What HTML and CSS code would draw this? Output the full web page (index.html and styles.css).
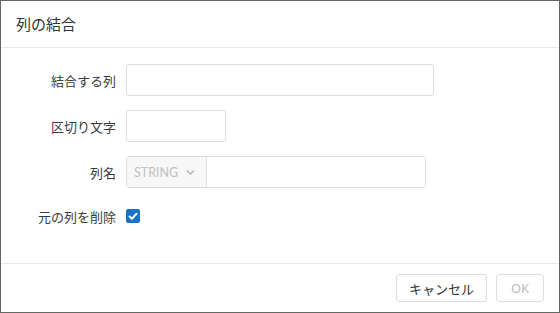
FILE: index.html
```html
<!DOCTYPE html>
<html lang="ja">
<head>
    <meta charset="UTF-8">
    <title>列の結合</title>
    <link rel="stylesheet" href="styles.css">
</head>
<body>
    <div class="dialog">
        <div class="dialog-header">列の結合</div>
        <div class="dialog-body">
            <div class="row">
                <label class="label">結合する列</label>
                <input type="text" class="input input-wide">
            </div>
            <div class="row">
                <label class="label">区切り文字</label>
                <input type="text" class="input input-small">
            </div>
            <div class="row">
                <label class="label">列名</label>
                <div class="combo">
                    <div class="type-select">
                        <span class="type-name">STRING</span>
                        <svg width="9" height="5" viewBox="0 0 9 5"><path d="M1 0.5 L4.5 4 L8 0.5" fill="none" stroke="#aaa" stroke-width="1.1"/></svg>
                    </div>
                    <input type="text" class="combo-input">
                </div>
            </div>
            <div class="row row-check">
                <label class="label">元の列を削除</label>
                <span class="checkbox">
                    <svg width="10" height="8" viewBox="0 0 10 8"><path d="M1 4 L4 6.7 L9 1.3" fill="none" stroke="#fff" stroke-width="2"/></svg>
                </span>
            </div>
        </div>
        <div class="dialog-footer">
            <button class="btn btn-cancel">キャンセル</button>
            <button class="btn btn-disabled">OK</button>
        </div>
    </div>
</body>
</html>
```

FILE: styles.css
```css
body {
    margin: 0;
    font-family: "Noto Sans CJK JP", "Noto Sans", sans-serif;
    color: #333;
}
.dialog {
    width: 558px;
    height: 311px;
    border: 1px solid #666;
    background: #fff;
    display: flex;
    flex-direction: column;
}
.dialog-header {
    height: 46px;
    padding-left: 15px;
    font-size: 15px;
    line-height: 46px;
    border-bottom: 1px solid #e6e6e6;
}
.dialog-body {
    padding: 16px 0 33px;
    display: flex;
    flex-direction: column;
    gap: 14px;
    border-bottom: 1px solid #e6e6e6;
}
.row {
    display: flex;
    align-items: center;
    height: 32px;
    gap: 10px;
}
.row-check {
    height: 28px;
}
.label {
    width: 115px;
    text-align: right;
    font-size: 13px;
    color: #3a3a3a;
}
.input {
    box-sizing: border-box;
    height: 32px;
    border: 1px solid #ddd;
    border-radius: 3px;
    outline: none;
}
.input-wide {
    width: 308px;
}
.input-small {
    width: 100px;
}
.combo {
    display: flex;
    width: 300px;
    height: 32px;
    box-sizing: border-box;
    border: 1px solid #ddd;
    border-radius: 3px;
    overflow: hidden;
}
.type-select {
    width: 80px;
    flex-shrink: 0;
    background: #f7f7f7;
    border-right: 1px solid #ddd;
    display: flex;
    align-items: center;
    padding: 0 11px 0 7px;
    box-sizing: border-box;
    font-family: Lato, sans-serif;
    font-size: 12.5px;
    color: #c0c0c0;
}
.type-name {
    flex: 1;
}
.combo-input {
    flex: 1;
    border: none;
    outline: none;
}
.checkbox {
    width: 14px;
    height: 14px;
    border-radius: 2px;
    background: #1a73c6;
    display: flex;
    align-items: center;
    justify-content: center;
}
.dialog-footer {
    flex: 1;
    display: flex;
    justify-content: flex-end;
    align-items: center;
    gap: 9px;
    padding-right: 15px;
}
.btn {
    height: 28px;
    padding: 0;
    background: #fff;
    border: 1px solid #ddd;
    border-radius: 3px;
    font-family: "Noto Sans CJK JP", sans-serif;
    font-size: 13px;
    color: #333;
}
.btn-cancel {
    width: 91px;
}
.btn-disabled {
    width: 48px;
    color: #bbb;
    font-family: "Noto Sans", sans-serif;
}
```
